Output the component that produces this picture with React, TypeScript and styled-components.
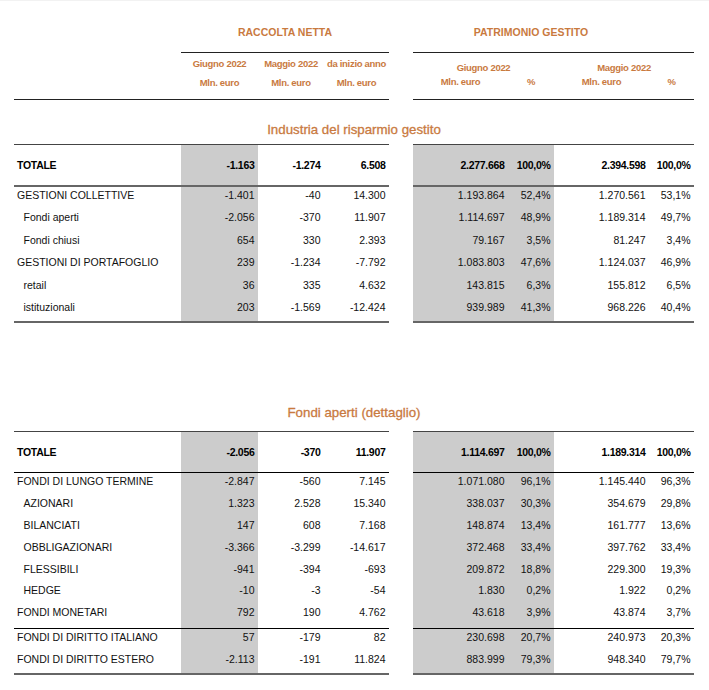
import React from "react";
import styled, { createGlobalStyle, css } from "styled-components";

const COLS = "167px 77px 66px 65px 24px 95px 46px 95px 45px";
const ORANGE = "#c97a3f";
const SHADE = "#cccccc";
const SHADED = [1, 5, 6];

const Global = createGlobalStyle`
  html, body { margin: 0; padding: 0; background: #fff; }
  body { font-family: "Liberation Sans", Arial, Helvetica, sans-serif; color: #111; }
`;

const Page = styled.div`
  width: 709px;
  height: 690px;
  box-sizing: border-box;
  padding-left: 14px;
  border-top: 1px solid #f2f2f2;
  overflow: hidden;
`;

const Grid = styled.div<{ $h?: number }>`
  display: grid;
  grid-template-columns: ${COLS};
  width: 680px;
  ${(p) => p.$h !== undefined && css`height: ${p.$h}px;`}
`;

const GroupTitle = styled.div<{ $span: string }>`
  grid-column: ${(p) => p.$span};
  text-align: center;
  color: ${ORANGE};
  font-weight: 700;
  font-size: 10.5px;
  line-height: 14px;
  padding-top: 24px;
`;

const SubHeader = styled.div`
  display: grid;
  grid-template-columns: ${COLS};
  grid-template-rows: 22px 24px;
  width: 680px;
`;

const headText = css`
  color: ${ORANGE};
  font-weight: 700;
  font-size: 9.5px;
  letter-spacing: -0.3px;
  text-align: center;
  white-space: nowrap;
`;

const HeadStack = styled.div<{ $col: number }>`
  ${headText};
  grid-column: ${(p) => p.$col};
  grid-row: 1 / 3;
  line-height: 19px;
  padding-top: 1px;
`;

const HeadMonth = styled.div<{ $col: string }>`
  ${headText};
  grid-column: ${(p) => p.$col};
  grid-row: 1;
  align-self: end;
  line-height: 14px;
`;

const HeadUnit = styled.div<{ $col: number }>`
  ${headText};
  grid-column: ${(p) => p.$col};
  grid-row: 2;
  line-height: 14px;
`;

const SectionTitle = styled.div<{ $h: number; $pb: number }>`
  box-sizing: border-box;
  width: 680px;
  height: ${(p) => p.$h}px;
  padding-bottom: ${(p) => p.$pb}px;
  display: flex;
  align-items: flex-end;
  justify-content: center;
  color: ${ORANGE};
  font-size: 13.3px;
  line-height: 16px;
  -webkit-text-stroke: 0.3px ${ORANGE};
`;

const RuleSeg = styled.div<{ $w: number; $c: string; $on: boolean }>`
  height: ${(p) => p.$w}px;
  background: ${(p) => (p.$on ? p.$c : "transparent")};
`;

const Cell = styled.div<{ $shade?: boolean; $kind: "label" | "sub" | "num" | "gap"; $total?: boolean }>`
  box-sizing: border-box;
  display: flex;
  align-items: ${(p) => (p.$total ? "center" : "flex-start")};
  justify-content: ${(p) => (p.$kind === "num" ? "flex-end" : "flex-start")};
  background: ${(p) => (p.$shade ? SHADE : "transparent")};
  padding-top: ${(p) => (p.$total ? 0 : 2)}px;
  padding-left: ${(p) => (p.$kind === "label" ? 3 : p.$kind === "sub" ? 9.5 : 0)}px;
  padding-right: ${(p) => (p.$kind === "num" ? 3.5 : 0)}px;
  font-size: 10.5px;
  line-height: 13px;
  font-weight: ${(p) => (p.$total ? 700 : 400)};
  letter-spacing: ${(p) => (p.$total ? "-0.3px" : "0")};
  color: ${(p) => (p.$total ? "#000" : "#111")};
  white-space: nowrap;
`;

function Line({ w, c, from = 0 }: { w: number; c: string; from?: number }) {
  return (
    <Grid>
      {Array.from({ length: 9 }).map((_, i) => (
        <RuleSeg key={i} $w={w} $c={c} $on={i >= from && i !== 4} />
      ))}
    </Grid>
  );
}

type RowData = { label: string; sub?: boolean; v: string[] };

function DataRow({ row, h, total }: { row: RowData; h: number; total?: boolean }) {
  const vals = [row.v[0], row.v[1], row.v[2], "", row.v[3], row.v[4], row.v[5], row.v[6]];
  return (
    <Grid $h={h}>
      <Cell $kind={row.sub ? "sub" : "label"} $total={total}>
        {row.label}
      </Cell>
      {vals.map((v, i) => (
        <Cell
          key={i}
          $kind={i === 3 ? "gap" : "num"}
          $shade={SHADED.includes(i + 1)}
          $total={total}
        >
          {v}
        </Cell>
      ))}
    </Grid>
  );
}

const T1_TOTAL: RowData = { label: "TOTALE", v: ["-1.163", "-1.274", "6.508", "2.277.668", "100,0%", "2.394.598", "100,0%"] };
const T1: RowData[] = [
  { label: "GESTIONI COLLETTIVE", v: ["-1.401", "-40", "14.300", "1.193.864", "52,4%", "1.270.561", "53,1%"] },
  { label: "Fondi aperti", sub: true, v: ["-2.056", "-370", "11.907", "1.114.697", "48,9%", "1.189.314", "49,7%"] },
  { label: "Fondi chiusi", sub: true, v: ["654", "330", "2.393", "79.167", "3,5%", "81.247", "3,4%"] },
  { label: "GESTIONI DI PORTAFOGLIO", v: ["239", "-1.234", "-7.792", "1.083.803", "47,6%", "1.124.037", "46,9%"] },
  { label: "retail", sub: true, v: ["36", "335", "4.632", "143.815", "6,3%", "155.812", "6,5%"] },
  { label: "istituzionali", sub: true, v: ["203", "-1.569", "-12.424", "939.989", "41,3%", "968.226", "40,4%"] },
];

const T2_TOTAL: RowData = { label: "TOTALE", v: ["-2.056", "-370", "11.907", "1.114.697", "100,0%", "1.189.314", "100,0%"] };
const T2A: RowData[] = [
  { label: "FONDI DI LUNGO TERMINE", v: ["-2.847", "-560", "7.145", "1.071.080", "96,1%", "1.145.440", "96,3%"] },
  { label: "AZIONARI", sub: true, v: ["1.323", "2.528", "15.340", "338.037", "30,3%", "354.679", "29,8%"] },
  { label: "BILANCIATI", sub: true, v: ["147", "608", "7.168", "148.874", "13,4%", "161.777", "13,6%"] },
  { label: "OBBLIGAZIONARI", sub: true, v: ["-3.366", "-3.299", "-14.617", "372.468", "33,4%", "397.762", "33,4%"] },
  { label: "FLESSIBILI", sub: true, v: ["-941", "-394", "-693", "209.872", "18,8%", "229.300", "19,3%"] },
  { label: "HEDGE", sub: true, v: ["-10", "-3", "-54", "1.830", "0,2%", "1.922", "0,2%"] },
  { label: "FONDI MONETARI", v: ["792", "190", "4.762", "43.618", "3,9%", "43.874", "3,7%"] },
];
const T2B: RowData[] = [
  { label: "FONDI DI DIRITTO ITALIANO", v: ["57", "-179", "82", "230.698", "20,7%", "240.973", "20,3%"] },
  { label: "FONDI DI DIRITTO ESTERO", v: ["-2.113", "-191", "11.824", "883.999", "79,3%", "948.340", "79,7%"] },
];

export default function App() {
  return (
    <>
      <Global />
      <Page>
        <Grid $h={51}>
          <GroupTitle $span="2 / 5">RACCOLTA NETTA</GroupTitle>
          <GroupTitle $span="6 / 9">PATRIMONIO GESTITO</GroupTitle>
        </Grid>
        <Line w={1} c="#222" from={1} />
        <SubHeader>
          <HeadStack $col={2}>
            Giugno 2022
            <br />
            Mln. euro
          </HeadStack>
          <HeadStack $col={3}>
            Maggio 2022
            <br />
            Mln. euro
          </HeadStack>
          <HeadStack $col={4}>
            da inizio anno
            <br />
            Mln. euro
          </HeadStack>
          <HeadMonth $col="6 / 8">Giugno 2022</HeadMonth>
          <HeadMonth $col="8 / 10">Maggio 2022</HeadMonth>
          <HeadUnit $col={6}>Mln. euro</HeadUnit>
          <HeadUnit $col={7}>%</HeadUnit>
          <HeadUnit $col={8}>Mln. euro</HeadUnit>
          <HeadUnit $col={9}>%</HeadUnit>
        </SubHeader>
        <Line w={1} c="#222" />

        <SectionTitle $h={43.5} $pb={5.5}>Industria del risparmio gestito</SectionTitle>
        <Line w={1.5} c="#444" />
        <DataRow row={T1_TOTAL} h={40} total />
        <Line w={2} c="#666" />
        {T1.map((r) => (
          <DataRow key={r.label} row={r} h={22.4} />
        ))}
        <Line w={2} c="#666" />

        <SectionTitle $h={107.6} $pb={10.3}>Fondi aperti (dettaglio)</SectionTitle>
        <Line w={1.5} c="#444" />
        <DataRow row={T2_TOTAL} h={40} total />
        <Line w={1} c="#000" />
        {T2A.map((r, i) => (
          <DataRow key={r.label} row={r} h={i === T2A.length - 1 ? 23.8 : 21.8} />
        ))}
        <Line w={1} c="#000" />
        {T2B.map((r) => (
          <DataRow key={r.label} row={r} h={21.8} />
        ))}
        <Line w={2} c="#666" />
      </Page>
    </>
  );
}
